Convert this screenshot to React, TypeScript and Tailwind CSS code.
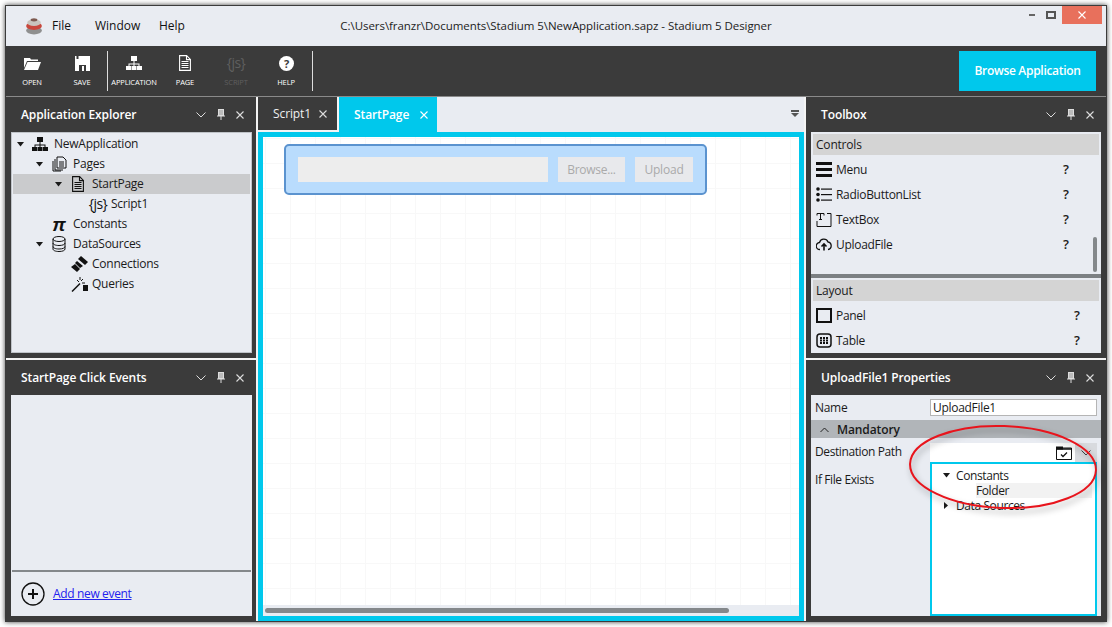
import React from "react";

const FONT = "font-['Open_Sans','Noto_Sans',sans-serif]";

const Chev = () => (
  <svg width="10" height="6" viewBox="0 0 10 6" fill="none" stroke="currentColor" strokeWidth="1"><path d="M.5.5 5 5 9.5.5" /></svg>
);
const Pin = () => (
  <svg width="8" height="11" viewBox="0 0 8 11" fill="none"><rect x="1.5" y="0.5" width="5" height="6" fill="#bbb" stroke="#ddd" /><path d="M0 7h8M4 7v4" stroke="#ddd" /></svg>
);
const Cross = ({ c = "#ddd" }: { c?: string }) => (
  <svg width="8" height="8" viewBox="0 0 8 8" stroke={c} strokeWidth="1.1"><path d="M.5.5l7 7M7.5.5l-7 7" /></svg>
);
const Caret = () => (
  <svg width="7" height="5" viewBox="0 0 7 5" fill="#1a1a1a"><path d="M0 0h7L3.5 4.5z" /></svg>
);
const Org = ({ c = "#111", s = 16 }: { c?: string; s?: number }) => (
  <svg width={s} height={s} viewBox="0 0 16 16" fill={c}>
    <rect x="5" y="1" width="6" height="5" />
    <path d="M7.5 6h1v2.500h5V11h-1V9.500h-4V11h-1V9.500h-4V11h-1V8.500h5z" />
    <rect x="0" y="11" width="5" height="4" /><rect x="5.500" y="11" width="5" height="4" /><rect x="11" y="11" width="5" height="4" />
  </svg>
);
const PageIcon = ({ c = "#111", w = 12, h = 16 }: { c?: string; w?: number; h?: number }) => (
  <svg width={w} height={h} viewBox="0 0 12 16" fill="none" stroke={c} strokeWidth="1.1">
    <path d="M.6.6h7l3.800 3.800v11H.6z" /><path d="M7.500.6v4h4M2.500 6.500h7M2.500 8.500h7M2.500 10.500h7M2.500 12.500h7" />
  </svg>
);
const Js = ({ c = "#111" }: { c?: string }) => (
  <span className="text-[14px] leading-none tracking-[-0.5px]" style={{ color: c }}>{"{js}"}</span>
);

const TreeRow = ({ indent, caret, icon, label, sel, iconW = 19, gap = 5 }: { indent: number; caret?: boolean; icon: React.ReactNode; label: string; sel?: boolean; iconW?: number; gap?: number }) => (
  <div className={`h-5 flex items-center ${sel ? "bg-[#cacbcd]" : ""}`} style={{ paddingLeft: indent }}>
    <span className="w-[14px] flex justify-start">{caret && <Caret />}</span>
    <span className="flex justify-center shrink-0" style={{ width: iconW, marginRight: gap }}>{icon}</span>
    <span className="text-[12px] text-[#1a1a1a] tracking-[-0.25px]">{label}</span>
  </div>
);

const PanelHead = ({ title }: { title: string }) => (
  <div className="h-[35px] shrink-0 flex items-center pl-[15px] pr-[12px] text-white">
    <span className="text-[12px] font-semibold flex-1 tracking-[-0.1px]">{title}</span>
    <span className="flex items-center gap-[11px] text-[#ddd]"><Chev /><Pin /><Cross /></span>
  </div>
);

const ToolBtn = ({ icon, label, dim, w = 50 }: { icon: React.ReactNode; label: string; dim?: boolean; w?: number }) => (
  <div className="flex flex-col items-center justify-start pt-[8px]" style={{ width: w }}>
    <div className="h-[18px] flex items-center justify-center">{icon}</div>
    <div className={`text-[7.500px] mt-[6px] leading-[9px] tracking-[-0.15px] ${dim ? "text-[#5f5f5f]" : "text-white"}`}>{label}</div>
  </div>
);

const ToolRow = ({ icon, label, q }: { icon: React.ReactNode; label: string; q: number }) => (
  <div className="h-[25px] flex items-center pl-[2px]">
    <span className="w-[17px] flex justify-center mr-[4px]">{icon}</span>
    <span className="text-[12px] text-[#1a1a1a] tracking-[-0.3px]" style={{ width: q }}>{label}</span>
    <span className="text-[13px] font-semibold text-[#1a1a1a]">?</span>
  </div>
);

export default function App() {
  return (
    <div className={`w-[1112px] h-[627px] bg-white p-[5px] overflow-hidden ${FONT}`}>
      <div className="relative w-[1102px] h-[617px] border border-[#3b3b3b] shadow-[0_0_5px_rgba(0,0,0,0.75)] flex flex-col bg-[#3b3b3b]">
        {/* Title bar */}
        <div className="h-[40px] shrink-0 bg-[#e9ecf2] flex relative">
          <div className="w-[46px] flex items-center justify-end pr-[9px] pb-[1px]">
            <svg width="18" height="18" viewBox="0 0 16 16">
              <ellipse cx="8" cy="12" rx="7" ry="3.500" fill="#8f8f8f" />
              <ellipse cx="8" cy="8" rx="7" ry="3.500" fill="#c9473c" />
              <ellipse cx="8" cy="5" rx="6" ry="3" fill="#c9c4bd" />
              <ellipse cx="8" cy="2.500" rx="3" ry="1.500" fill="#7d5a50" />
            </svg>
          </div>
          <div className="flex items-center text-[12px] text-[#111]">
            <span className="w-[43px]">File</span>
            <span className="w-[64px]">Window</span>
            <span>Help</span>
          </div>
          <div className="absolute left-0 right-0 top-[12px] text-center text-[11.500px] leading-[16px] text-[#222] tracking-[-0.05px]">
            C:\Users\franzr\Documents\Stadium 5\NewApplication.sapz - Stadium 5 Designer
          </div>
          <div className="ml-auto mr-[4px] flex h-[18px]">
            <div className="w-[14px] mr-[2px] flex items-center justify-center"><div className="w-[6px] h-[2px] bg-[#666]" /></div>
            <div className="w-[20px] mr-[1px] flex items-center justify-center"><div className="w-[10px] h-[8px] border-2 border-[#555]" /></div>
            <div className="w-[40px] bg-[#e8705c] flex items-center justify-center"><Cross c="#fff" /></div>
          </div>
        </div>
        {/* Toolbar */}
        <div className="h-[50px] shrink-0 bg-[#3b3b3b] flex items-start pl-[1px]">
          <ToolBtn label="OPEN" icon={<svg width="17" height="13" viewBox="0 0 17 13" fill="#fff"><path d="M0 1h6l1 1.500h7V4H3L0 11z" /><path d="M3.500 5H17l-3 8H0z" /></svg>} />
          <ToolBtn label="SAVE" icon={<svg width="15" height="15" viewBox="0 0 15 15"><path d="M0 0h15v15H0z" fill="#fff" /><rect x="1.500" y="0" width="2" height="3" fill="#3b3b3b" /><rect x="4" y="9" width="7" height="6" fill="#3b3b3b" /><rect x="7" y="10" width="2" height="5" fill="#fff" /></svg>} />
          <div className="w-px h-[40px] bg-[#ddd] mt-[5px] mr-[1px]" />
          <ToolBtn label="APPLICATION" icon={<Org c="#fff" />} />
          <ToolBtn label="PAGE" icon={<PageIcon c="#fff" />} w={52} />
          <ToolBtn label="SCRIPT" icon={<Js c="#5f5f5f" />} dim />
          <ToolBtn label="HELP" icon={<svg width="15" height="15" viewBox="0 0 15 15"><circle cx="7.500" cy="7.500" r="7.500" fill="#fff" /><text x="7.500" y="11.500" textAnchor="middle" fontSize="11" fontWeight="700" fill="#3b3b3b">?</text></svg>} />
          <div className="w-px h-[40px] bg-[#ddd] mt-[5px] ml-[1px]" />
          <div className="ml-auto mr-[10px] mt-[5px] w-[137px] h-[40px] bg-[#00c8ec] flex items-center justify-center text-white text-[12px] font-semibold tracking-[-0.3px]">Browse Application</div>
        </div>
        <div className="h-px shrink-0 bg-[#8a8a8a]" />
        {/* Main */}
        <div className="flex-1 flex min-h-0">
          {/* Left column */}
          <div className="w-[250px] shrink-0 flex flex-col">
            <div className="h-[261px] shrink-0 flex flex-col">
              <PanelHead title="Application Explorer" />
              <div className="ml-[5px] mr-[4px] h-[221px] bg-[#e9ecf2] border border-[#bfc3c8] pt-[1px] px-[1px]">
                <TreeRow indent={4} caret icon={<Org />} label="NewApplication" iconW={18} />
                <TreeRow indent={23} caret icon={<svg width="15" height="16" viewBox="0 0 15 16" fill="none" stroke="#111"><path d="M5 1h6l3 3v8H5zM3 3v11h8M1 5v10h8" /><path d="M7 6h5M7 8h5M7 10h5" /></svg>} label="Pages" iconW={18} />
                <TreeRow sel indent={42} caret icon={<PageIcon />} label="StartPage" iconW={18} />
                <TreeRow indent={62} icon={<Js />} label="Script1" iconW={18} gap={4} />
                <TreeRow indent={23} icon={<span className="font-['Liberation_Sans'] italic font-bold text-[19px] leading-none text-[#111]">π</span>} label="Constants" iconW={18} />
                <TreeRow indent={23} caret icon={<svg width="14" height="16" viewBox="0 0 14 16" fill="none" stroke="#111"><ellipse cx="7" cy="3" rx="6" ry="2.500" /><path d="M1 3v10c0 1.500 2.500 2.500 6 2.500s6-1 6-2.500V3M1 7c0 1.500 2.500 2.500 6 2.500S13 8.500 13 7M1 10.500C1 12 3.500 13 7 13s6-1 6-2.500" /></svg>} label="DataSources" iconW={18} />
                <TreeRow indent={43} gap={4} icon={<svg width="17" height="16" viewBox="0 0 17 16" fill="#111"><path d="M10 0l7 6-3 3-7-6z" /><path d="M6 5l6 5-3 2-5-5z" /><path d="M4 8l5 5-3 3-6-5z" /></svg>} label="Connections" iconW={18} />
                <TreeRow indent={43} gap={4} icon={<svg width="17" height="16" viewBox="0 0 17 16" stroke="#111" fill="none"><path d="M1 15.500L9 7.500" strokeWidth="1.500" /><path d="M9 1v3M6 4l2 2M12 3l-2 2M11 7h3" /><path d="M12 9h5v6h-5z" fill="#111" stroke="none" /></svg>} label="Queries" iconW={18} />
              </div>
            </div>
            <div className="h-[2px] shrink-0 bg-[#f4f4f4]" />
            <div className="flex-1 flex flex-col min-h-0">
              <PanelHead title="StartPage Click Events" />
              <div className="ml-[5px] mr-[4px] h-[221px] bg-[#e9ecf2] flex flex-col">
                <div className="flex-1" />
                <div className="h-[2px] bg-[#84888b] mx-px" />
                <div className="h-[44px] flex items-center pl-[10px] gap-[8px]">
                  <svg width="24" height="24" viewBox="0 0 24 24" fill="none" stroke="#111"><circle cx="12" cy="12" r="11" strokeWidth="1.300" /><path d="M12 7v10M7 12h10" strokeWidth="2" /></svg>
                  <span className="text-[12px] text-[#2222ee] underline tracking-[-0.35px]">Add new event</span>
                </div>
              </div>
            </div>
          </div>
          {/* Center column */}
          <div className="w-[550px] shrink-0 flex flex-col border-l-2 border-r-2 border-[#f4f4f4]">
            <div className="h-[35px] shrink-0 bg-[#e9ecf2] flex">
              <div className="w-[81px] bg-[#3b3b3b] border-r-2 border-b-2 border-[#f4f4f4] flex items-center pl-[15px] text-[#f0f0f0] text-[12px] tracking-[-0.1px]">
                <span className="w-[46px]">Script1</span><Cross />
              </div>
              <div className="w-[98px] bg-[#00c8ec] flex items-center pl-[15px] text-white text-[12px] font-semibold tracking-[-0.1px]">
                <span className="w-[66px]">StartPage</span><Cross c="#fff" />
              </div>
              <div className="ml-auto mr-[5px] mt-[13px] flex flex-col items-center">
                <div className="w-[8px] h-[2px] bg-[#555] mb-px" />
                <svg width="8" height="4" viewBox="0 0 8 4" fill="#555"><path d="M0 0h8L4 4z" /></svg>
              </div>
            </div>
            <div className="flex-1 border-[5px] border-[#00c8ec] flex flex-col min-h-0 bg-white">
              <div className="flex-1 pt-[7px] pl-[21px] bg-[linear-gradient(#f8f8f8_1px,transparent_1px),linear-gradient(90deg,#f8f8f8_1px,transparent_1px)] bg-[size:25px_25px] bg-[position:2px_1px]">
                <div className="w-[423px] h-[51px] rounded-[5px] border-2 border-[#5b93cf] bg-[#b9dcfd] flex items-center pl-[12px] gap-[10px]">
                  <div className="w-[250px] h-[25px] bg-[#ededed]" />
                  <div className="w-[67px] h-[25px] bg-[#e8e9ec] text-[#aaa] text-[12px] tracking-[-0.3px] flex items-center justify-center">Browse...</div>
                  <div className="w-[58px] h-[25px] bg-[#e8e9ec] text-[#aaa] text-[12px] tracking-[-0.2px] flex items-center justify-center">Upload</div>
                </div>
              </div>
              <div className="h-[11px] shrink-0 bg-[#e9ecf2] pl-[2px] flex items-center">
                <div className="w-[464px] h-[5px] rounded-full bg-[#84888b]" />
              </div>
            </div>
          </div>
          {/* Right column */}
          <div className="flex-1 flex flex-col min-w-0">
            <div className="h-[261px] shrink-0 flex flex-col">
              <PanelHead title="Toolbox" />
              <div className="ml-[5px] mr-[5px] h-[221px] bg-[#e9ecf2] flex flex-col">
                <div className="h-[142px] relative pt-[2px] px-[2px]">
                  <div className="h-[21px] bg-[#d4d4d4] text-[12px] text-[#1a1a1a] pl-[3px] flex items-center tracking-[-0.2px]">Controls</div>
                  <div className="pt-[2px]">
                    <ToolRow q={227} label="Menu" icon={<svg width="16" height="15" viewBox="0 0 16 15" fill="#111"><rect width="16" height="3" /><rect y="6" width="16" height="3" /><rect y="12" width="16" height="3" /></svg>} />
                    <ToolRow q={227} label="RadioButtonList" icon={<svg width="16" height="15" viewBox="0 0 16 15" fill="#111"><circle cx="2" cy="2" r="1.800" /><circle cx="2" cy="7.500" r="1.800" /><circle cx="2" cy="13" r="1.800" /><rect x="5" y="1.500" width="11" height="1.200" /><rect x="5" y="7" width="11" height="1.200" /><rect x="5" y="12.500" width="11" height="1.200" /></svg>} />
                    <ToolRow q={227} label="TextBox" icon={<svg width="16" height="14" viewBox="0 0 16 14" fill="none" stroke="#111"><path d="M1 8v5.500h14V.5h-4" /><path d="M1 .5v2M1 .5h7v2M4.500.5v6M3 6.500h3" /></svg>} />
                    <ToolRow q={227} label="UploadFile" icon={<svg width="16" height="13" viewBox="0 0 16 13" fill="none" stroke="#111" strokeWidth="1.300"><path d="M4 11.500a3.500 3.500 0 0 1-.5-7A4.500 4.500 0 0 1 12 4a3.800 3.800 0 0 1 0 7.500" /><path d="M8 12.500V6M5.500 8.500 8 6l2.500 2.500" strokeWidth="1.600" /></svg>} />
                  </div>
                  <div className="absolute right-[4px] top-[105px] w-[4px] h-[35px] rounded-full bg-[#84888b]" />
                </div>
                <div className="h-[4px] bg-[#7c8083]" />
                <div className="pt-[2px] px-[2px]">
                  <div className="h-[21px] bg-[#d4d4d4] text-[12px] text-[#1a1a1a] pl-[3px] flex items-center tracking-[-0.2px]">Layout</div>
                  <div className="pt-[2px]">
                    <ToolRow q={238} label="Panel" icon={<div className="w-[16px] h-[15px] border-2 border-[#111]" />} />
                    <ToolRow q={238} label="Table" icon={<svg width="16" height="15" viewBox="0 0 16 15" fill="#111"><rect x="1" y="1" width="14" height="13" rx="3" fill="none" stroke="#111" strokeWidth="1.500" /><rect x="4" y="4" width="2" height="2" /><rect x="7" y="4" width="2" height="2" /><rect x="10" y="4" width="2" height="2" /><rect x="4" y="6.500" width="2" height="2" /><rect x="7" y="6.500" width="2" height="2" /><rect x="10" y="6.500" width="2" height="2" /><rect x="4" y="9" width="2" height="2" /><rect x="7" y="9" width="2" height="2" /><rect x="10" y="9" width="2" height="2" /></svg>} />
                  </div>
                </div>
              </div>
            </div>
            <div className="h-[2px] shrink-0 bg-[#f4f4f4]" />
            <div className="flex-1 flex flex-col min-h-0">
              <PanelHead title="UploadFile1 Properties" />
              <div className="ml-[5px] mr-[5px] h-[221px] bg-[#e9ecf2] flex flex-col relative">
                <div className="h-[25px] flex items-center pl-[4px] tracking-[-0.3px]">
                  <span className="w-[115px] text-[12px] text-[#1a1a1a]">Name</span>
                  <div className="w-[167px] h-[17px] bg-white border border-[#b5b5b5] text-[12px] leading-[15px] pl-[2px] text-[#1a1a1a]">UploadFile1</div>
                </div>
                <div className="h-[18px] bg-[#b1b5b9] flex items-center pl-[9px] gap-[8px] pt-px">
                  <svg width="9" height="6" viewBox="0 0 9 6" fill="none" stroke="#222"><path d="M.5 5 4.500 1l4 4" /></svg>
                  <span className="text-[12px] font-semibold text-[#1a1a1a] tracking-[-0.1px]">Mandatory</span>
                </div>
                <div className="flex pl-[4px] flex-1 min-h-0">
                  <div className="w-[115px] text-[12px] text-[#1a1a1a] pt-[5px] shrink-0 tracking-[-0.4px]">
                    <div className="h-[28px]">Destination Path</div>
                    <div>If File Exists</div>
                  </div>
                  <div className="w-[167px] flex flex-col pt-[5px]">
                    <div className="h-[19px] flex bg-[#d8dade] shrink-0">
                      <div className="w-[145px] bg-white flex items-center justify-end pr-[3px]">
                        <svg width="16" height="14" viewBox="0 0 16 14" fill="none" stroke="#111"><path d="M.5 2h15v11.500H.5z" /><path d="M0 .5h7v3H0z" fill="#111" stroke="none" /><path d="M0 3h16" strokeWidth="1.500" /><path d="M5 8.500 7 10.500l4-4" strokeWidth="1.300" /></svg>
                      </div>
                      <div className="flex-1 flex items-center justify-center text-[#444]"><Chev /></div>
                    </div>
                    <div className="flex-1 min-h-0 bg-white border-2 border-[#00c8ec] pt-[4px] tracking-[-0.4px]">
                      <div className="h-[15px] flex items-center text-[12px] text-[#1a1a1a] pl-[11px]"><span className="w-[13px]"><Caret /></span>Constants</div>
                      <div className="h-[15px] flex items-center text-[12px] text-[#1a1a1a] ml-[44px] mr-[3px] bg-[#f2f2f2]">Folder</div>
                      <div className="h-[15px] flex items-center text-[12px] text-[#1a1a1a] pl-[12px]"><span className="w-[12px]"><svg width="4" height="7" viewBox="0 0 4 7" fill="#1a1a1a"><path d="M0 0l4 3.500L0 7z" /></svg></span>Data Sources</div>
                    </div>
                  </div>
                </div>
              </div>
            </div>
          </div>
        </div>
        {/* Hand-drawn annotation over the screenshot */}
        <svg className="absolute left-[892px] top-[408px] drop-shadow-[2px_4px_3px_rgba(0,0,0,0.35)]" width="210" height="120" viewBox="0 0 210 120" fill="none">
          <ellipse cx="105" cy="53" rx="93" ry="41" transform="rotate(2 105 53)" stroke="#e8141c" strokeWidth="2" />
        </svg>
      </div>
    </div>
  );
}
